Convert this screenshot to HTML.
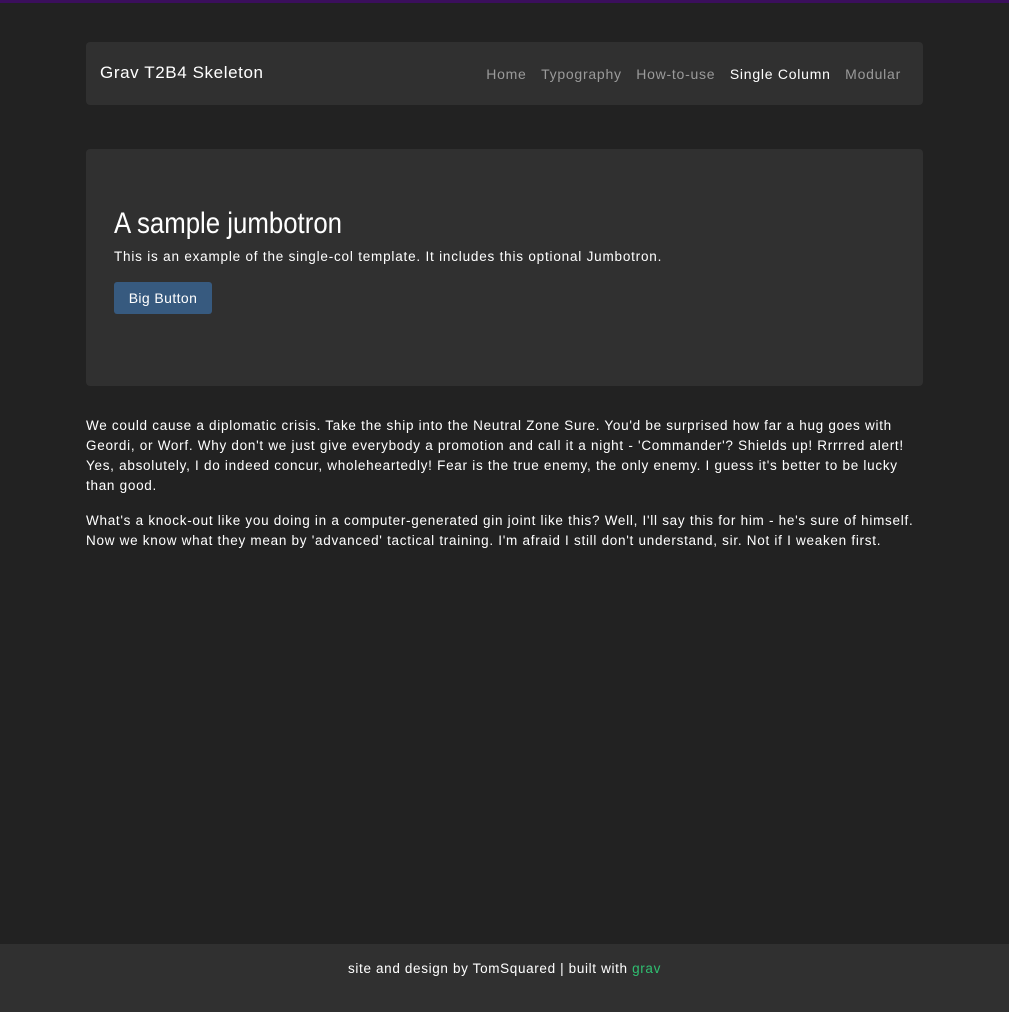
<!DOCTYPE html>
<html><head><meta charset="utf-8"><style>
html,body{margin:0;padding:0}
body{width:1009px;height:1009px;background:#222;border-top:3px solid #3b0f5c;box-sizing:border-box;position:relative;font-family:"Liberation Sans",sans-serif;color:#fff;overflow:hidden}
.nav{position:absolute;left:86px;top:39px;width:837px;height:63px;background:#303030;border-radius:4px}
.brand{position:absolute;left:14px;top:21px;font-size:17px;letter-spacing:0.6px}
.links{position:absolute;right:22px;top:24px;font-size:14px;color:#9a9a9a;letter-spacing:0.75px;white-space:nowrap}
.links span{margin-left:14.5px}
.links .a{color:#fff}
.jumbo{position:absolute;left:86px;top:146px;width:837px;height:237px;background:#303030;border-radius:4px}
h1{position:absolute;left:28px;top:58px;margin:0;font-weight:normal;font-size:30px;transform:scaleX(0.86);transform-origin:left;white-space:nowrap}
.lead{position:absolute;left:28px;top:100px;font-size:13.5px;letter-spacing:0.8px;white-space:nowrap}
.btn{position:absolute;left:28px;top:133px;width:98px;height:32px;background:#375a7f;border-radius:3px;font-size:14px;line-height:32px;text-align:center;letter-spacing:0.4px}
.p{position:absolute;left:86px;font-size:13.5px;line-height:20px;letter-spacing:0.72px;white-space:nowrap}
.foot{position:absolute;left:0;top:941px;width:1009px;height:68px;background:#303030;text-align:center;font-size:13.5px;line-height:50px;letter-spacing:0.65px}
.foot span{color:#2fbf71}
</style></head><body>
<div class="nav"><div class="brand">Grav T2B4 Skeleton</div>
<div class="links"><span>Home</span><span>Typography</span><span>How-to-use</span><span class="a">Single Column</span><span>Modular</span></div></div>
<div class="jumbo"><h1>A sample jumbotron</h1>
<div class="lead">This is an example of the single-col template. It includes this optional Jumbotron.</div>
<div class="btn">Big Button</div></div>
<div class="p" style="top:413px">We could cause a diplomatic crisis. Take the ship into the Neutral Zone Sure. You'd be surprised how far a hug goes with<br>Geordi, or Worf. Why don't we just give everybody a promotion and call it a night - 'Commander'? Shields up! Rrrrred alert!<br>Yes, absolutely, I do indeed concur, wholeheartedly! Fear is the true enemy, the only enemy. I guess it's better to be lucky<br>than good.</div>
<div class="p" style="top:508px">What's a knock-out like you doing in a computer-generated gin joint like this? Well, I'll say this for him - he's sure of himself.<br>Now we know what they mean by 'advanced' tactical training. I'm afraid I still don't understand, sir. Not if I weaken first.</div>
<div class="foot">site and design by TomSquared | built with <span>grav</span></div>
</body></html>
